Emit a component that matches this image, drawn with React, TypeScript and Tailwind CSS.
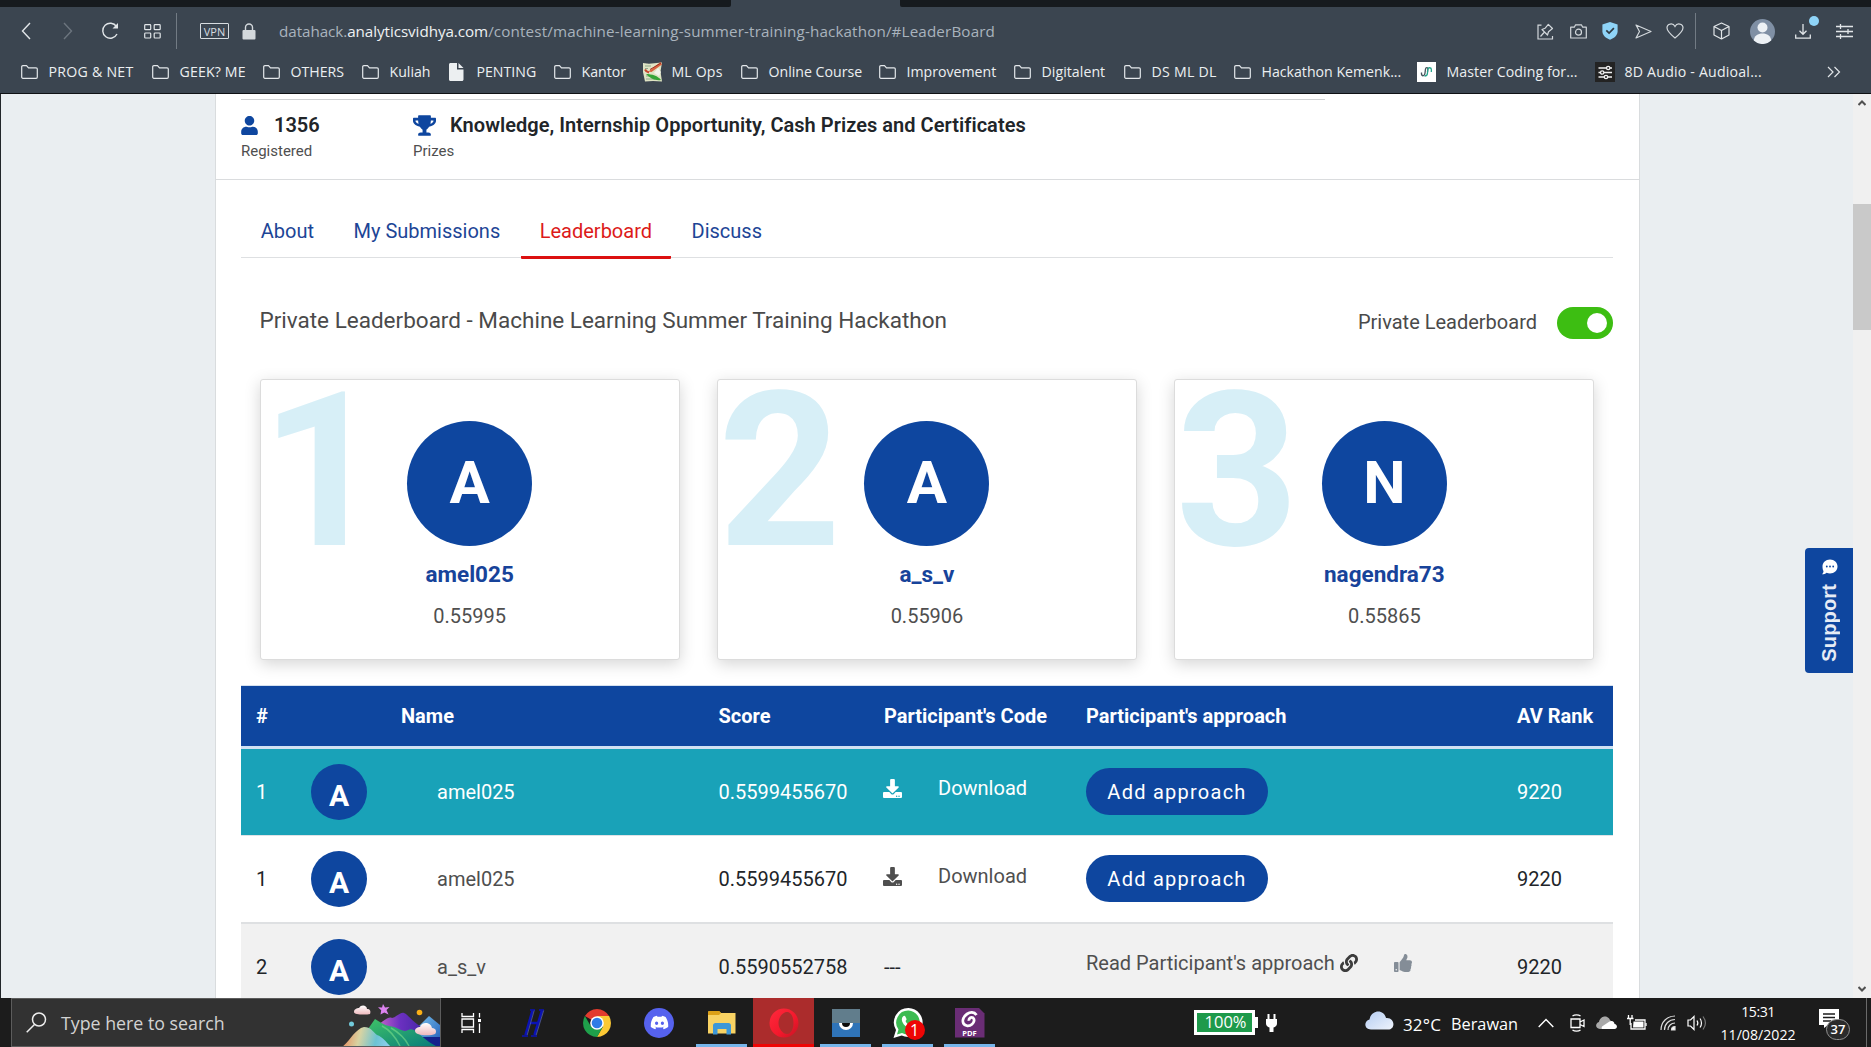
import React from 'react';
import { FaUser, FaTrophy, FaDownload, FaLink, FaThumbsUp, FaDiscord } from 'react-icons/fa';

const FolderIcon = () => (
  <svg width="17" height="14" viewBox="0 0 17 14" fill="none" stroke="#e3e7ea" strokeWidth="1.2">
    <path d="M.7 12V1.900C.7 1.200 1.200.7 1.900.7h3.600l2 2.200h7.600c.7 0 1.200.5 1.200 1.200V12c0 .7-.5 1.300-1.200 1.300H1.900C1.200 13.300.7 12.700.7 12z" />
  </svg>
);

const FileIcon = () => (
  <svg width="15" height="18" viewBox="0 0 15 18" fill="#eceff1">
    <path d="M1.500 0H8v6.500h6.500V16.500c0 .8-.7 1.500-1.500 1.500H1.500C.7 18 0 17.300 0 16.500v-15C0 .7.7 0 1.500 0z" />
    <path d="M9.500 0l5 5h-5z" />
  </svg>
);

const MlOpsIcon = () => (
  <svg width="21" height="20" viewBox="0 0 21 20">
    <path d="M1 1l6 .8L20 .5l-1.500 9L20 19.500l-9-.5-8 .5L1 10z" fill="#dfe3c4" />
    <path d="M3 4h6M3 6.500h3M3 9h2M4 14h4M4 17h9" stroke="#8fa98a" strokeWidth="1.100" />
    <path d="M6.500 9.500l3 .5L20 2.500 18.500 0z" fill="#d8623f" />
    <path d="M8 7.500L19 1" stroke="#9c2f22" strokeWidth="1" />
    <path d="M3 7.500c1 2 2 2.500 4 3" stroke="#c8452f" strokeWidth="2" fill="none" />
    <path d="M4 12c6 0 12 2 15 6-6 1-11-2-15-6z" fill="#35a436" />
    <path d="M16 6l3 4-2 4-5-3z" fill="#f1f3e9" />
  </svg>
);

const CodingIcon = () => (
  <svg width="19" height="20" viewBox="0 0 19 20" fill="none" strokeWidth="1.300">
    <rect width="19" height="20" fill="#fff" />
    <path d="M4.500 10.500c-.5 4 3 4.500 3.500.5l.5-4c.3-2 2.500-1.800 2.300 0l-.3 3" stroke="#45545c" />
    <path d="M7.500 14c2 0 3-1 3-3l.3-3.500c.4-2.500 3.700-2.300 3.600.5l-.1 2" stroke="#27a58c" />
  </svg>
);

const AudioIcon = () => (
  <svg width="20" height="20" viewBox="0 0 20 20" fill="none" stroke="#f1f1f1" strokeWidth="1.300">
    <rect width="20" height="20" fill="#232323" stroke="none" />
    <path d="M3.500 6h8M15 6h2M3.500 10.500h2M9 10.500h8M3.500 15h5.500M13 15h4" />
    <circle cx="13.200" cy="6" r="1.700" />
    <circle cx="7.200" cy="10.500" r="1.700" />
    <circle cx="11" cy="15" r="1.700" />
  </svg>
);

const bookmarks = [
  { icon: <FolderIcon />, label: 'PROG & NET', box: 'w-[131px]', text: 'tracking-[0.250px]' },
  { icon: <FolderIcon />, label: 'GEEK? ME', box: 'w-[111px]', text: 'tracking-[0.150px]' },
  { icon: <FolderIcon />, label: 'OTHERS', box: 'w-[99px]', text: '' },
  { icon: <FolderIcon />, label: 'Kuliah', box: 'w-[87px]', text: '' },
  { icon: <FileIcon />, label: 'PENTING', box: 'w-[105px]', text: '' },
  { icon: <FolderIcon />, label: 'Kantor', box: 'w-[88px]', text: '' },
  { icon: <MlOpsIcon />, label: 'ML Ops', box: 'w-[99px]', text: 'pl-[2px] tracking-[0.150px]' },
  { icon: <FolderIcon />, label: 'Online Course', box: 'w-[138px]', text: '' },
  { icon: <FolderIcon />, label: 'Improvement', box: 'w-[135px]', text: '' },
  { icon: <FolderIcon />, label: 'Digitalent', box: 'w-[110px]', text: 'tracking-[0.050px]' },
  { icon: <FolderIcon />, label: 'DS ML DL', box: 'w-[110px]', text: 'tracking-[0.250px]' },
  { icon: <FolderIcon />, label: 'Hackathon Kemenk...', box: 'w-[183px]', text: '' },
  { icon: <CodingIcon />, label: 'Master Coding for...', box: 'w-[178px]', text: 'pl-[2px] tracking-[0.070px]' },
  { icon: <AudioIcon />, label: '8D Audio - Audioal...', box: 'w-[232px]', text: 'pl-[2px] tracking-[0.200px]' },
];

const slot = 'flex shrink-0 items-center justify-center';

function BrowserBar() {
  return (
    <header className="h-[94px] border-b border-[#0f1114] bg-[#3b4550] font-['Open_Sans',sans-serif]">
      <div className="flex h-[7px] justify-between">
        <div className="w-[731px] rounded-br-[2px] bg-[#161a1e]" />
        <div className="w-[971px] rounded-bl-[2px] bg-[#161a1e]" />
      </div>
      <div className="flex h-[48px] items-center pl-[3px]">
        <div className={`${slot} w-[46px]`}>
          <svg width="10" height="18" viewBox="0 0 10 18" fill="none" stroke="#e1e5e8" strokeWidth="1.400"><path d="M9 1L1.500 9 9 17" /></svg>
        </div>
        <div className={`${slot} w-[38px]`}>
          <svg width="10" height="18" viewBox="0 0 10 18" fill="none" stroke="#6c757e" strokeWidth="1.400"><path d="M1 1l7.500 8L1 17" /></svg>
        </div>
        <div className={`${slot} w-[46px]`}>
          <svg width="18" height="18" viewBox="0 0 18 18" fill="none" stroke="#e1e5e8" strokeWidth="1.400">
            <path d="M15.500 4.500A7.500 7.500 0 1 0 16 12" />
            <path d="M17 1v5.500h-5.500z" fill="#e1e5e8" stroke="none" />
          </svg>
        </div>
        <div className={`${slot} w-[38px]`}>
          <svg width="17" height="15" viewBox="0 0 17 15" fill="none" stroke="#e1e5e8" strokeWidth="1.200">
            <rect x=".7" y=".7" width="6" height="5" rx=".8" /><rect x="10.200" y=".7" width="6" height="5" rx=".8" />
            <rect x=".7" y="9" width="6" height="5" rx=".8" /><rect x="10.200" y="9" width="6" height="5" rx=".8" />
          </svg>
        </div>
        <div className="ml-[5px] h-[36px] w-px bg-[#727b84]" />
        <div className="ml-[23px] flex h-[16px] w-[29px] items-center justify-center rounded-[1px] border border-[#d7dce0] text-[11px] leading-none text-[#d7dce0]">VPN</div>
        <svg className="ml-[13px]" width="14" height="17" viewBox="0 0 14 17">
          <path d="M3.500 8V4.500a3.500 3.500 0 0 1 7 0V8" fill="none" stroke="#d3d8dc" strokeWidth="1.400" />
          <rect x=".5" y="7" width="13" height="9.500" rx="1" fill="#d3d8dc" />
        </svg>
        <div className="ml-[23px] flex-1 whitespace-pre text-[15.200px] text-[#a9b3bd]">
          <span className="tracking-[-0.05px]">datahack.<span className="text-[#eef1f3]">analyticsvidhya.com</span></span>
          <span className="tracking-[0.150px]">/contest/machine-learning-summer-training-hackathon/#LeaderBoard</span>
        </div>
        <div className={`${slot} w-[32px]`}>
          <svg width="17" height="17" viewBox="0 0 17 17" fill="none" stroke="#d3d8dc" strokeWidth="1.200">
            <path d="M4.500 2.200H1v13.800h14.500V13" /><path d="M3.500 13.500l4-4.500M5 6.500l5.500 5.500 1-3.200 4-3.300-4.200-4.200L8 5.300z" strokeLinejoin="round" />
          </svg>
        </div>
        <div className={`${slot} w-[34px]`}>
          <svg width="17" height="15" viewBox="0 0 17 15" fill="none" stroke="#d3d8dc" strokeWidth="1.200">
            <path d="M.7 3.200h3.600L5.600.8h5.800l1.300 2.400h3.600V14H.7z" strokeLinejoin="round" /><circle cx="8.500" cy="8.200" r="3" />
          </svg>
        </div>
        <div className={`${slot} w-[30px]`}>
          <svg width="16" height="18" viewBox="0 0 16 18">
            <path d="M8 0l7.600 2.500v6.700c0 4-3.400 7-7.600 8.500C3.800 16.200.4 13.200.4 9.200V2.500z" fill="#8fd4f8" />
            <path d="M4.300 8.300l2.800 2.800 4.800-4.900" fill="none" stroke="#2d3942" strokeWidth="1.700" />
          </svg>
        </div>
        <div className={`${slot} w-[36px]`}>
          <svg width="17" height="15" viewBox="0 0 17 15" fill="none" stroke="#d3d8dc" strokeWidth="1.200" strokeLinejoin="round"><path d="M1 1l15 6.500L1 14l3.500-6.500z" /></svg>
        </div>
        <div className={`${slot} w-[28px]`}>
          <svg width="18" height="16" viewBox="0 0 18 16" fill="none" stroke="#d3d8dc" strokeWidth="1.200"><path d="M9 15C4 11 1 8 1 4.800 1 .5 7-.5 9 3.500c2-4 8-3 8 1.300C17 8 14 11 9 15z" /></svg>
        </div>
        <div className={`${slot} w-[13px]`}><div className="h-[36px] w-px bg-[#727b84]" /></div>
        <div className={`${slot} w-[38px]`}>
          <svg width="17" height="18" viewBox="0 0 17 18" fill="none" stroke="#e1e5e8" strokeWidth="1.200" strokeLinejoin="round"><path d="M8.500 1l7.500 3.500v8.500L8.500 17 1 13V4.500zM1 4.500L8.500 8.500 16 4.500M8.500 8.500V17" /></svg>
        </div>
        <div className={`${slot} w-[44px]`}>
          <svg width="25" height="25" viewBox="0 0 25 25">
            <circle cx="12.500" cy="12.500" r="12.500" fill="#7f8fa4" />
            <circle cx="12.500" cy="8.500" r="5" fill="#edf1f5" />
            <path d="M3.800 21.500C4 17 8 14.500 12.500 14.500s8.500 2.500 8.700 7A12.500 12.500 0 0 1 3.800 21.500z" fill="#edf1f5" />
          </svg>
        </div>
        <div className={`${slot} relative w-[38px]`}>
          <svg width="16" height="15" viewBox="0 0 16 15" fill="none" stroke="#e1e5e8" strokeWidth="1.300"><path d="M8 0v10M4.500 6.800L8 10.300l3.500-3.500M.7 10.500v3.700h14.600v-3.700" /></svg>
          <span className="absolute top-[-8px] right-[3px] h-[10px] w-[10px] rounded-full bg-[#8fd4f8]" />
        </div>
        <div className={`${slot} mr-[5px] w-[44px]`}>
          <svg width="17" height="15" viewBox="0 0 17 15" fill="none" stroke="#e1e5e8" strokeWidth="1.300"><path d="M0 2.500h17M0 7.500h17M0 12.500h17M4.500 0v5M12 5v5M4.500 10v5" /></svg>
        </div>
      </div>
      <div className="flex h-[34px] items-center pl-[21px] text-[14.150px] text-[#eceff1]">
        {bookmarks.map((b) => (
          <div key={b.label} className={`flex shrink-0 items-center whitespace-nowrap ${b.box}`}>
            <div className="flex w-[27.500px] shrink-0 items-center">{b.icon}</div>
            <span className={b.text}>{b.label}</span>
          </div>
        ))}
        <svg width="14" height="12" viewBox="0 0 14 12" fill="none" stroke="#e1e5e8" strokeWidth="1.200"><path d="M1 1l5 5-5 5M7.500 1l5 5-5 5" /></svg>
      </div>
    </header>
  );
}

const winners = [
  { rank: 1, letter: 'A', name: 'amel025', score: '0.55995' },
  { rank: 2, letter: 'A', name: 'a_s_v', score: '0.55906' },
  { rank: 3, letter: 'N', name: 'nagendra73', score: '0.55865' },
];

const tableGrid = 'grid grid-cols-[55px_90px_317.500px_165.500px_202px_431px_96px] items-center pl-[15px]';

const rows = [
  { rank: '1', name: 'amel025', score: '0.5599455670', download: true, row: 'h-[86px] bg-[#19a2b8] text-white', muted: 'text-white', dl: 'pb-[8px]' },
  { rank: '1', name: 'amel025', score: '0.5599455670', download: true, row: 'h-[87px] border-t border-[#dee2e6] bg-white text-[#212529]', muted: 'text-[#4f4f4f]', dl: 'pb-[6px]' },
  { rank: '2', name: 'a_s_v', score: '0.5590552758', download: false, row: 'h-[88px] border-t-2 border-[#dee0e2] bg-[#f1f1f1] text-[#212529]', muted: 'text-[#4f4f4f]', dl: '' },
];

function Tab({ label, active }: { label: string; active?: boolean }) {
  return (
    <a className={`h-[43px] border-b-[3px] px-[18.750px] ${active ? 'rounded-[1px] border-[#dc1010] text-[#dc1a1a]' : 'border-transparent text-[#1d4596]'}`}>{label}</a>
  );
}

const ChatBubble = () => (
  <svg width="17" height="16" viewBox="0 0 17 16">
    <path d="M9 .5c4.300 0 7.500 3 7.500 7s-3.200 7-7.500 7c-1.300 0-2.400-.3-3.400-.8-1.200 1-2.800 1.600-4.600 1.600 1-1 1.500-2.200 1.500-3.300-.7-1-1-2.700-1-4.500 0-4 3.200-7 7.500-7z" fill="#fff" />
    <circle cx="5.800" cy="7.500" r=".9" fill="#0e469f" /><circle cx="9" cy="7.500" r=".9" fill="#0e469f" /><circle cx="12.200" cy="7.500" r=".9" fill="#0e469f" />
  </svg>
);

function Page() {
  return (
    <main className="flex h-[904px] overflow-hidden border-l border-[#22262a] bg-[#eaeef1] font-[Roboto,sans-serif] text-[20px] leading-[30px]">
      <div className="ml-[214px] w-[1425px] shrink-0 border-x border-[#d9dcde] bg-white">
        <section className="h-[86px] border-b border-[#dadcde] px-[25px] pt-[5px]">
          <div className="h-px w-[1084px] bg-[#cfd1d3]" />
          <div className="flex pt-[10px]">
            <div className="w-[172px]">
              <div className="flex items-center font-semibold text-[#212529]">
                <FaUser className="mr-[15px] ml-[-1px] text-[#0e469f]" size={19} />1356
              </div>
              <div className="text-[15px] leading-[22px] text-[#4f4f4f]">Registered</div>
            </div>
            <div>
              <div className="flex items-center font-semibold text-[#212529]">
                <FaTrophy className="mr-[14px] text-[#0e469f]" size={23} />
                <span className="tracking-[0.040px]">Knowledge, Internship Opportunity, Cash Prizes and Certificates</span>
              </div>
              <div className="text-[15px] leading-[22px] text-[#4f4f4f]">Prizes</div>
            </div>
          </div>
        </section>

        <section className="pt-[36px] pr-[26px] pl-[25px]">
          <nav className="flex h-[42px] gap-[2px] border-b border-[#dee0e2] pl-px">
            <Tab label="About" />
            <Tab label="My Submissions" />
            <Tab label="Leaderboard" active />
            <Tab label="Discuss" />
          </nav>

          <div className="mt-[49px] flex h-[32px] items-center pl-[18.500px] text-[#4a4a4a]">
            <h1 className="flex-1 pb-[6px] text-[22.500px]">Private Leaderboard - Machine Learning Summer Training Hackathon</h1>
            <span className="mr-[20px] pb-[2px]">Private Leaderboard</span>
            <div className="flex h-[32px] w-[56px] items-center justify-end rounded-full bg-[#3dbe12] pr-[6px]">
              <div className="h-[20px] w-[20px] rounded-full bg-white" />
            </div>
          </div>

          <div className="mt-[40px] grid grid-cols-3 gap-x-[37.500px] px-[18.750px]">
            {winners.map((w) => (
              <article key={w.rank} className="relative flex h-[281px] flex-col items-center rounded-[3px] border border-[#dcdcdc] bg-white pt-[41px] shadow-[0_4px_16px_rgba(0,0,0,0.170)]">
                <span className="absolute top-[-16px] left-0 text-[215px] leading-none font-bold text-[#d7eff7]">{w.rank}</span>
                <div className="relative flex h-[125px] w-[125px] items-center justify-center rounded-full bg-[#0e469f] pb-[2px] text-[60px] font-bold text-white">{w.letter}</div>
                <h2 className="mt-[13px] text-[22.500px] font-bold text-[#17439a]">{w.name}</h2>
                <p className="mt-[12px] text-[#4f4f4f]">{w.score}</p>
              </article>
            ))}
          </div>

          <div className="mt-[25px] border-t border-[#d5e1ef]">
            <div className={`${tableGrid} h-[63px] border-b-[3px] border-[#cfe1f3] bg-[#0e469f] font-bold text-white`}>
              <span>#</span><span /><span>Name</span><span>Score</span>
              <span>Participant's Code</span><span>Participant's approach</span><span>AV Rank</span>
            </div>
            {rows.map((r, i) => (
              <div key={i} className={`${tableGrid} ${r.row}`}>
                <span>{r.rank}</span>
                <span className="flex h-[56px] w-[56px] items-center justify-center rounded-full bg-[#0e469f] pt-[8px] text-[30px] font-bold text-white">A</span>
                <span className={`pl-[36px] ${r.muted}`}>{r.name}</span>
                <span>{r.score}</span>
                {r.download
                  ? <span className={`flex items-center ${r.muted} ${r.dl}`}><FaDownload size={19} className="mr-[36px] ml-[-1px]" />Download</span>
                  : <span>---</span>}
                {r.download
                  ? <button className="mb-[2px] h-[47px] w-[182px] rounded-full bg-[#0e469f] pt-[1px] text-center tracking-[1.250px] text-white">Add approach</button>
                  : <span className="flex items-center pb-[8px] text-[#4f4f4f]">Read Participant's approach<FaLink size={18} className="ml-[5px] text-[#3c3c3c]" /><FaThumbsUp size={18} className="ml-[36px] text-[#848d97]" /></span>}
                <span>9220</span>
              </div>
            ))}
          </div>
        </section>
      </div>

      <aside className="flex-1 pt-[454px]">
        <div className="ml-auto flex h-[125px] w-[48px] flex-col items-center rounded-l-[4px] bg-[#0e469f] pt-[11px] text-white">
          <ChatBubble />
          <span className="mt-[9px] rotate-180 font-['Liberation_Sans',sans-serif] text-[20px] leading-[22px] font-bold tracking-[0.150px] text-[#e6ecf5] [writing-mode:vertical-rl]">Support</span>
        </div>
      </aside>

      <div className="flex w-[18px] shrink-0 flex-col items-center bg-[#f0f0f0] pt-[6px]">
        <svg width="8" height="6" viewBox="0 0 8 6" fill="none" stroke="#505050" strokeWidth="2"><path d="M.5 5L4 1.500 7.500 5" /></svg>
        <div className="mt-[98px] h-[126px] w-full bg-[#c9c9c9]" />
        <svg className="mt-[656px]" width="8" height="6" viewBox="0 0 8 6" fill="none" stroke="#505050" strokeWidth="2"><path d="M.5 1L4 4.500 7.500 1" /></svg>
      </div>
    </main>
  );
}

const Scenery = () => (
  <svg width="98" height="47" viewBox="0 0 98 47">
    <defs>
      <linearGradient id="dawn" x1="0" y1="0.500" x2="1" y2="0.600"><stop offset="0" stopColor="#e98a5c" /><stop offset=".35" stopColor="#d8d3a2" /><stop offset=".7" stopColor="#6cc3d3" /><stop offset="1" stopColor="#8ed0ee" /></linearGradient>
      <linearGradient id="leaf" x1="0" y1="0" x2="1" y2="1"><stop offset="0" stopColor="#3fc267" /><stop offset="1" stopColor="#067a7c" /></linearGradient>
      <linearGradient id="violet" x1="0" y1="0" x2="1" y2="0"><stop offset="0" stopColor="#c965c9" /><stop offset=".5" stopColor="#6b30c0" /><stop offset="1" stopColor="#4a27a8" /></linearGradient>
      <linearGradient id="ocean" x1="0" y1="0" x2="1" y2="1"><stop offset="0" stopColor="#7cc6ef" /><stop offset="1" stopColor="#1d57b5" /></linearGradient>
      <linearGradient id="puff" x1="0" y1="0" x2="0" y2="1"><stop offset="0" stopColor="#fff" /><stop offset="1" stopColor="#eeb9bd" /></linearGradient>
    </defs>
    <path d="M74 30L87 17l11 9v22H78z" fill="url(#ocean)" />
    <path d="M80 38h18v10H86z" fill="#14218c" />
    <path d="M36 26c6-4 10-9 14-7 5-1 8-6 12-5 5 2 8 9 18 14l-4 10H44z" fill="url(#violet)" />
    <path d="M26 30l7-10c5 3 9 6 14 7 8 1 10 4 16 5 4-1 5-3 9-1 6 4 13 12 24 17H34z" fill="url(#leaf)" />
    <path d="M40 27c8 4 14 12 18 20M49 29c7 4 14 10 18 18" stroke="#7ade8a" strokeWidth="1.500" fill="none" opacity=".6" />
    <path d="M0 48C8 42 13 30 22 28c7 0 8 4 13 8 6 2 10 8 14 12z" fill="url(#dawn)" />
    <path d="M12 13c0-3 3-4 5-4 2-4 8-3 8 1 3 0 4 2 3 5-4 1-16 1-16-2z" fill="url(#puff)" />
    <path d="M73 32c0-3 3-4 5-4 2-6 11-5 12 1 4 0 5 4 3 6-4 2-20 2-20-3z" fill="url(#puff)" />
    <path d="M41 5l2 3.500 4.500-.5-3 3 2 4.500-4.200-2-3.800 2 .7-4.300-3.200-3 4 .3z" fill="#dc83f0" />
    <circle cx="77.500" cy="13.500" r="2.800" fill="#fbb016" />
    <circle cx="9.500" cy="25" r="2.500" fill="#72cbdc" />
  </svg>
);

const apps = [
  {
    key: 'hash', box: 'w-[65px]', bar: '',
    icon: (
      <svg width="23" height="28" viewBox="0 0 23 28" fill="none" stroke="#0b12b4" strokeWidth="2.600">
        <path d="M3.500 26L10.500 1.500M12.500 26L20 1.500M6 14h10" />
        <path d="M0 27h6M9 27h6M8 1h5M17 1h5" strokeWidth="1.500" />
        <path d="M5.200 26L12.200 1.500M14.200 26L21.700 1.500" stroke="#5d6cb4" strokeWidth=".7" />
      </svg>
    ),
  },
  {
    key: 'chrome', box: 'w-[62px]', bar: '',
    icon: (
      <svg width="28" height="28" viewBox="0 0 28 28">
        <path d="M14 14L1.900 7A14 14 0 0 1 26.100 7z" fill="#e33b2e" />
        <path d="M14 7h12.100A14 14 0 0 1 14 28l6-10.500z" fill="#fcc934" />
        <path d="M1.900 7A14 14 0 0 0 14 28l6-10.500-6 3-6-3z" fill="#1fa04b" />
        <circle cx="14" cy="14" r="6.800" fill="#fff" /><circle cx="14" cy="14" r="5.300" fill="#2f7ce6" />
      </svg>
    ),
  },
  {
    key: 'discord', box: 'w-[62px]', bar: '',
    icon: <div className="flex h-[30px] w-[30px] items-center justify-center rounded-full bg-[#5662ee]"><FaDiscord size={19} color="#fff" /></div>,
  },
  {
    key: 'files', box: 'w-[63px]', bar: 'w-[51px] bg-[#76b5ea]',
    icon: (
      <svg width="28" height="24" viewBox="0 0 28 24">
        <path d="M0 1.500C0 .7.7 0 1.500 0H11l2 2h14.500v20.500H0z" fill="#f8d263" />
        <path d="M0 4V1.500C0 .7.700 0 1.500 0H11l2 2-2 2z" fill="#dca017" />
        <path d="M5 23.500V14.500c0-1.500 1-2.500 2.500-2.500h13c1.500 0 2.500 1 2.500 2.500v9h-4.500V18h-9v5.500z" fill="#3d97d8" />
      </svg>
    ),
  },
  {
    key: 'opera', box: 'w-[61px] bg-[#ab2c2c]', bar: 'w-full bg-[#ee0505]',
    icon: (
      <svg width="30" height="30" viewBox="0 0 30 30">
        <defs><linearGradient id="opera" x1="0" y1="0" x2="1" y2="1"><stop offset="0" stopColor="#ff2a3c" /><stop offset=".6" stopColor="#f3182c" /><stop offset="1" stopColor="#c41424" /></linearGradient></defs>
        <path fillRule="evenodd" d="M15 .5a14.500 14.500 0 1 0 0 29 14.500 14.500 0 0 0 0-29zM18 4c4 0 6.500 5 6.500 11S22 26 18 26 9.500 21 9.500 15 14 4 18 4z" fill="url(#opera)" />
      </svg>
    ),
  },
  {
    key: 'eye', box: 'w-[63px]', bar: 'w-[51px] bg-[#76b5ea]',
    icon: (
      <svg width="28" height="28" viewBox="0 0 28 28">
        <rect width="28" height="28" fill="#2f74b8" /><rect width="28" height="14" fill="#617d8c" />
        <path d="M7 14h14a7 7 0 0 1-14 0z" fill="#fff" /><path d="M10 14h8a4 4 0 0 1-8 0z" fill="#0b0b0b" />
      </svg>
    ),
  },
  {
    key: 'chat', box: 'w-[61px]', bar: 'w-[51px] bg-[#76b5ea]',
    icon: (
      <div className="relative h-[30px] w-[30px]">
        <svg width="30" height="30" viewBox="0 0 30 30">
          <path d="M15.500 0A14.500 14.500 0 0 0 3 22L.5 30l8.200-2.500A14.500 14.500 0 1 0 15.500 0z" fill="#fff" />
          <path d="M15.500 2.500A12 12 0 0 0 5.500 21.500L4 26.500l5-1.500A12 12 0 1 0 15.500 2.500z" fill="#3dbb52" />
          <path d="M10 8.500c1-1 2-.8 2.500.3l1 2.200c.3.800-.8 1.500-1 2.100.8 2 2.600 3.700 4.800 4.600l1.700-1.700 3.400 1.700c.2 2-1.800 3.400-3.600 3.300-4.500-.3-9.800-5-10-9.500 0-1.200.400-2.200 1.200-3z" fill="#fff" />
        </svg>
        <span className="absolute top-[12px] left-[12px] flex h-[20px] w-[20px] items-center justify-center rounded-full bg-[#ee0505] text-[16px] leading-none text-white">1</span>
      </div>
    ),
  },
  {
    key: 'pdf', box: 'w-[63px]', bar: 'w-[51px] bg-[#76b5ea]',
    icon: (
      <div className="flex h-[30px] w-[30px] flex-col items-center bg-[#6a2d75] pt-[3px] [clip-path:polygon(0_0,80%_0,100%_20%,100%_100%,0_100%)]">
        <svg width="17" height="17" viewBox="0 0 17 17" fill="none" stroke="#fff" strokeWidth="2.800"><path d="M15.500 4C13 .5 9 1 6 3 2.500 5.500 1 9.500 2.500 12.500c1.500 3 6 3 8.500.8 2-1.800 3-5 1-6.500-2-1-4.500.5-4 3" /></svg>
        <span className="mt-[1px] text-[7.500px] leading-[8px] font-bold text-white">PDF</span>
      </div>
    ),
  },
];

function Taskbar() {
  return (
    <footer className="flex h-[49px] bg-[#1c1c1c] font-['Open_Sans',sans-serif] text-white">
      <div className="ml-[11px] flex w-[430px] items-center border border-[#5c5c5c] bg-[#323232] pl-[14px]">
        <svg width="21" height="21" viewBox="0 0 21 21" fill="none" stroke="#eee" strokeWidth="1.500"><circle cx="13" cy="7.500" r="6.500" /><path d="M8.500 12.500L.7 20.300" /></svg>
        <span className="ml-[14px] flex-1 pt-[2px] text-[17.800px] text-[#d2d2d2]">Type here to search</span>
        <Scenery />
      </div>
      <div className="flex w-[60px] items-center justify-center">
        <svg width="21" height="20" viewBox="0 0 21 20" fill="none" stroke="#fff" strokeWidth="1.300">
          <path d="M1 0v3.500h11.500V0M1 20v-3.500h11.500V20M1 6h11.500v8H1zM18.500 0v4.500M18.500 10.500V20" /><rect x="17" y="6" width="3" height="3" fill="#fff" stroke="none" />
        </svg>
      </div>
      {apps.map((a) => (
        <div key={a.key} className={`relative flex shrink-0 items-center justify-center ${a.box}`}>
          {a.icon}
          {a.bar && <span className={`absolute bottom-0 h-[3px] ${a.bar}`} />}
        </div>
      ))}
      <div className="flex flex-1 items-center pl-[193px]">
        <div className="flex h-[25px] w-[61px] items-center justify-center border-[3px] border-white bg-[#1e9a4b] pl-[2px] text-[16.500px]">100%</div>
        <div className="h-[11px] w-[3px] bg-white" />
        <svg className="ml-[8px]" width="11" height="18" viewBox="0 0 11 18" fill="#fff"><path d="M1.500 0h2v5h4V0h2v5H11v4.500c0 2-1.500 3.500-3.500 4V18h-4v-4.500C1.500 13 0 11.500 0 9.500V5h1.500z" /></svg>
        <svg className="mb-[5px] ml-[88px]" width="29" height="19" viewBox="0 0 29 19">
          <defs><linearGradient id="cloud" x1="0" y1="0" x2="1" y2="1"><stop offset="0" stopColor="#b5cdf2" /><stop offset="1" stopColor="#eef3fc" /></linearGradient></defs>
          <path d="M6 18.500c-7 0-7.500-8.500-1.500-10C6-1.500 19-2.500 21 7c9-1 10 11.500 2 11.500z" fill="url(#cloud)" />
        </svg>
        <span className="ml-[9px] pt-[4px] text-[17px] tracking-[0.150px]">32°C</span>
        <span className="ml-[10px] pt-[4px] text-[16.300px]">Berawan</span>
        <svg className="ml-[20px]" width="16" height="10" viewBox="0 0 16 10" fill="none" stroke="#fff" strokeWidth="1.400"><path d="M.7 9L8 1.500 15.300 9" /></svg>
        <svg className="ml-[16px]" width="15" height="18" viewBox="0 0 15 18" fill="none" stroke="#fff" strokeWidth="1.300"><path d="M2.500 2c2-1.500 6-1.500 8 0M2.500 16c2 1.500 6 1.500 8 0M1 5h9v8.500H1zM10 8l4-2v6.500l-4-2" /></svg>
        <svg className="ml-[11px]" width="21" height="13" viewBox="0 0 21 13"><path d="M4 13c-5 0-5-6-1-7C4-.5 12-1.500 14 4l6 6-7 3z" fill="#a9a9a9" /><path d="M6 13c-1-1 0-3 1.500-3.500l6-4c3-1.500 5 .500 5 2.500 3.500.5 3 5 0 5z" fill="#fff" /></svg>
        <svg className="ml-[10px]" width="20" height="15" viewBox="0 0 20 15" fill="none" stroke="#fff" strokeWidth="1.300"><path d="M4 8v6h14V5H8" /><path d="M6.500 6.500h10v6H6z" fill="#fff" stroke="none" /><path d="M19 8v3M1.500 0v3M5 0v3M0 3.500h6.500M3.200 4v6" /></svg>
        <svg className="ml-[13px]" width="16" height="16" viewBox="0 0 16 16" fill="none" stroke="#ddd" strokeWidth="1.200"><path d="M1 15C1 7 7 1 15 1M4.500 15C4.500 9 9 4.500 15 4.500M8 15c0-4 3-7 7-7" /><path d="M11.500 15c0-2 1.500-3.500 3.500-3.500V15z" fill="#fff" /></svg>
        <svg className="ml-[11px]" width="20" height="18" viewBox="0 0 20 18" fill="none" stroke="#fff" strokeWidth="1.200"><path d="M1 6h2.500L7 2.500v13L3.500 12H1z" /><path d="M10 6.500c1 1.500 1 3.500 0 5M13 4.500c2 2.500 2 6.500 0 9" /><path d="M16 2.500c3 4 3 9 0 13" stroke="#777" /></svg>
        <div className="ml-[12px] w-[78px] text-center text-[14.150px] leading-[23px]">
          <div className="tracking-[-0.500px]">15:31</div>
          <div>11/08/2022</div>
        </div>
        <div className="relative ml-[22px] h-[28px] w-[32px]">
          <svg width="20" height="19" viewBox="0 0 20 19"><path d="M0 0h20v16H9l-4 3v-3H0z" fill="#fff" /><path d="M4 5h12M4 8.500h12M4 12h8" stroke="#1c1c1c" strokeWidth="1.300" /></svg>
          <span className="absolute top-[10px] left-[7px] flex h-[21px] w-[24px] items-center justify-center rounded-full border border-[#909090] bg-[#2b2b2b] text-[13px] leading-none font-semibold">37</span>
        </div>
        <div className="ml-auto h-full w-px bg-[#6a6a6a]" />
        <div className="w-[4px]" />
      </div>
    </footer>
  );
}

export default function App() {
  return (
    <div className="h-[1047px] w-[1871px] overflow-hidden">
      <BrowserBar />
      <Page />
      <Taskbar />
    </div>
  );
}
